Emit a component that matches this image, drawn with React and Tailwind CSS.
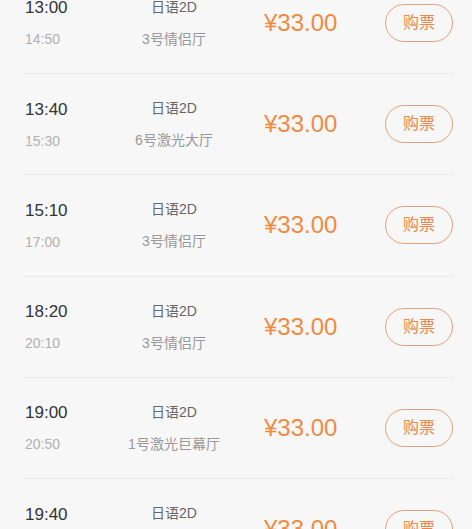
const shows = [
  { start: "13:00", end: "14:50", lang: "日语2D", hall: "3号情侣厅" },
  { start: "13:40", end: "15:30", lang: "日语2D", hall: "6号激光大厅" },
  { start: "15:10", end: "17:00", lang: "日语2D", hall: "3号情侣厅" },
  { start: "18:20", end: "20:10", lang: "日语2D", hall: "3号情侣厅" },
  { start: "19:00", end: "20:50", lang: "日语2D", hall: "1号激光巨幕厅" },
  { start: "19:40", end: "21:30", lang: "日语2D", hall: "3号情侣厅" },
];

const ShowRow = ({ show }) => (
  <div className="flex h-[101.25px] items-center border-b border-[#ebebeb] pl-[5px] pr-[1px]">
    <div className="w-[89px]">
      <div className="text-[17px] leading-[20px] text-[#333]">{show.start}</div>
      <div className="mt-[13px] text-[14px] leading-[16px] text-[#b0b0b0]">{show.end}</div>
    </div>
    <div className="w-[120px] text-center">
      <div className="text-[14px] leading-[16px] text-[#666]">{show.lang}</div>
      <div className="mt-[16px] text-[14px] leading-[16px] text-[#999]">{show.hall}</div>
    </div>
    <div className="ml-[30px] text-[24px] leading-[28px] text-[#ef8a3f]">¥33.00</div>
    <button className="ml-auto flex h-[38px] w-[68px] items-center justify-center rounded-full border-[1.5px] border-[#e4a07c] text-[16px] text-[#e8874f]">
      购票
    </button>
  </div>
);

export default function App() {
  return (
    <div className="h-[529px] overflow-hidden bg-[#f7f7f7] font-['Liberation_Sans','Noto_Sans_CJK_SC',sans-serif]">
      <div className="ml-[20px] mr-[18px] mt-[-27.25px]">
        {shows.map((show) => <ShowRow key={show.start} show={show} />)}
      </div>
    </div>
  );
}
